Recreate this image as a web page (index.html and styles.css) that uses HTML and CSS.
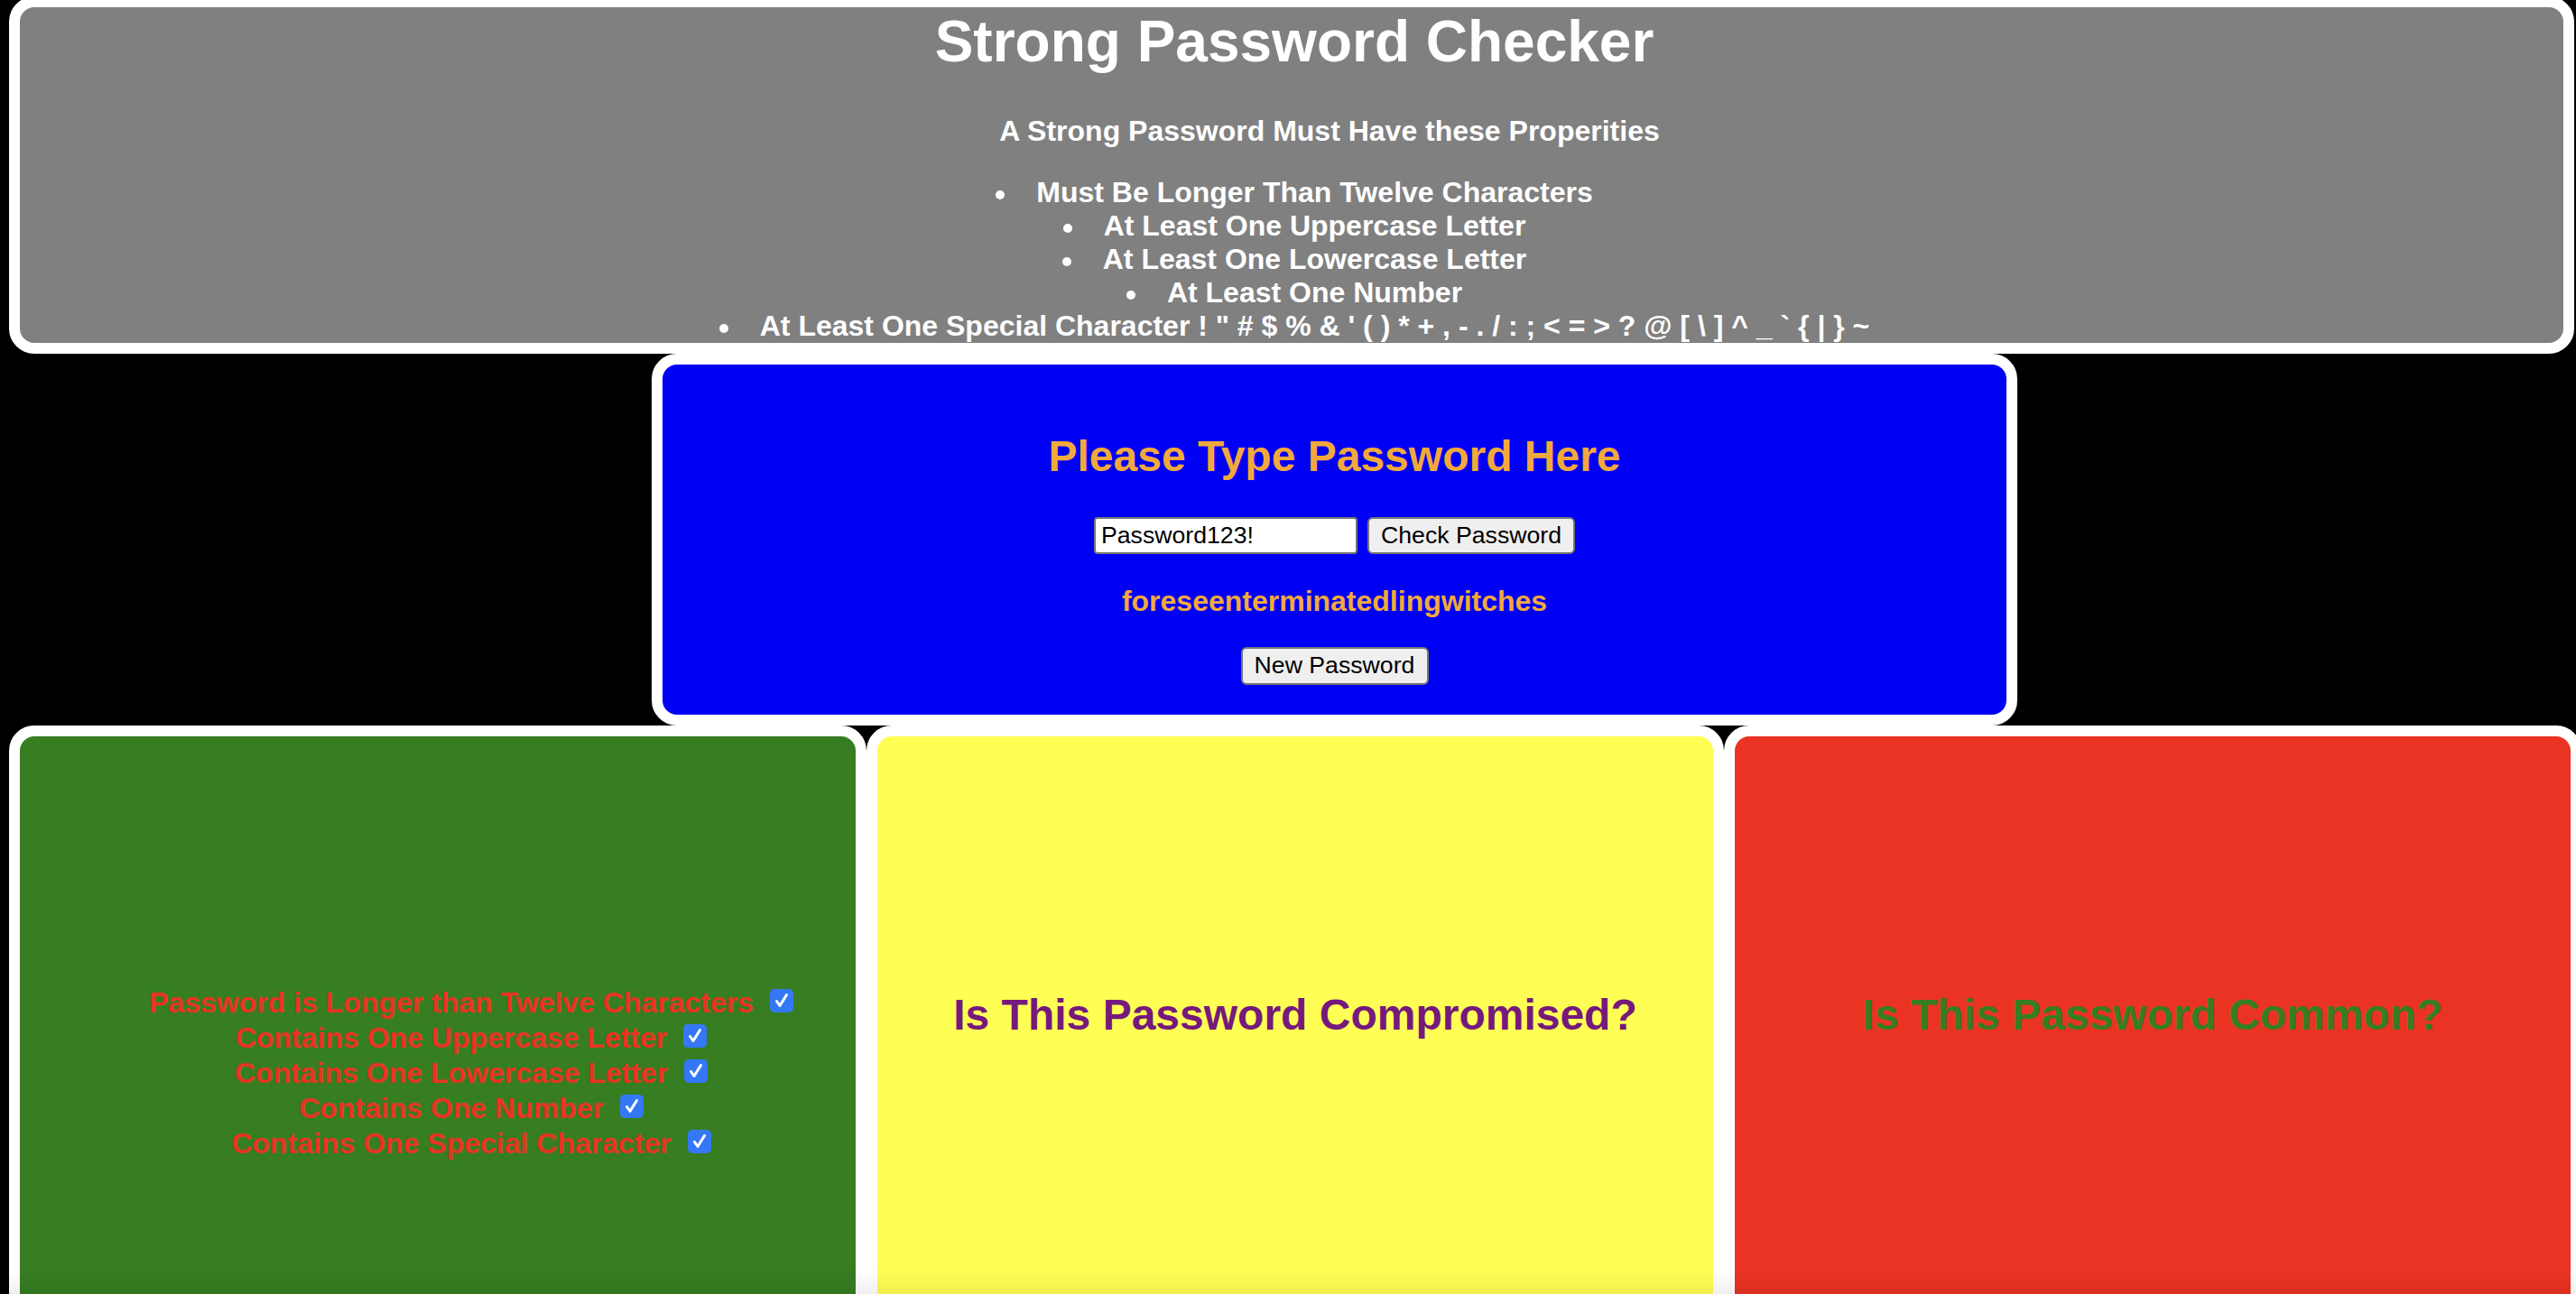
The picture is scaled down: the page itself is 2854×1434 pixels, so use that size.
FILE: index.html
```html
<!DOCTYPE html>
<html lang="en">
<head>
<meta charset="utf-8">
<title>Strong Password Checker</title>
<link rel="stylesheet" href="styles.css">
</head>
<body>
<header class="intro">
  <h1 class="title">Strong Password Checker</h1>
  <h4 class="subtitle">A Strong Password Must Have these Properities</h4>
  <ul class="rules">
    <li>Must Be Longer Than Twelve Characters</li>
    <li>At Least One Uppercase Letter</li>
    <li>At Least One Lowercase Letter</li>
    <li>At Least One Number</li>
    <li>At Least One Special Character ! " # $ % &amp; ' ( ) * + , - . / : ; &lt; = &gt; ? @ [ \ ] ^ _ ` { | } ~</li>
  </ul>
</header>

<section class="entry">
  <h2 class="entry-title">Please Type Password Here</h2>
  <div class="entry-row">
    <input class="pw-input" type="text" value="Password123!">
    <button class="btn btn-check" type="button">Check Password</button>
  </div>
  <p class="suggestion">foreseenterminatedlingwitches</p>
  <button class="btn btn-new" type="button">New Password</button>
</section>

<div class="results">
  <section class="card card-checks">
    <div class="check-line">Password is Longer than Twelve Characters <svg class="tick" viewBox="0 0 26 26"><rect x="0" y="0" width="26" height="26" rx="5" fill="#3478f6"/><path d="M7.5 13.5 L11 18.5 L18.5 6.5" fill="none" stroke="#fff" stroke-width="3" stroke-linecap="round" stroke-linejoin="round"/></svg></div>
    <div class="check-line">Contains One Uppercase Letter <svg class="tick" viewBox="0 0 26 26"><rect x="0" y="0" width="26" height="26" rx="5" fill="#3478f6"/><path d="M7.5 13.5 L11 18.5 L18.5 6.5" fill="none" stroke="#fff" stroke-width="3" stroke-linecap="round" stroke-linejoin="round"/></svg></div>
    <div class="check-line">Contains One Lowercase Letter <svg class="tick" viewBox="0 0 26 26"><rect x="0" y="0" width="26" height="26" rx="5" fill="#3478f6"/><path d="M7.5 13.5 L11 18.5 L18.5 6.5" fill="none" stroke="#fff" stroke-width="3" stroke-linecap="round" stroke-linejoin="round"/></svg></div>
    <div class="check-line">Contains One Number <svg class="tick" viewBox="0 0 26 26"><rect x="0" y="0" width="26" height="26" rx="5" fill="#3478f6"/><path d="M7.5 13.5 L11 18.5 L18.5 6.5" fill="none" stroke="#fff" stroke-width="3" stroke-linecap="round" stroke-linejoin="round"/></svg></div>
    <div class="check-line">Contains One Special Character <svg class="tick" viewBox="0 0 26 26"><rect x="0" y="0" width="26" height="26" rx="5" fill="#3478f6"/><path d="M7.5 13.5 L11 18.5 L18.5 6.5" fill="none" stroke="#fff" stroke-width="3" stroke-linecap="round" stroke-linejoin="round"/></svg></div>
  </section>
  <section class="card card-compromised">
    <h2 class="card-title">Is This Password Compromised?</h2>
  </section>
  <section class="card card-common">
    <h2 class="card-title">Is This Password Common?</h2>
  </section>
</div>
</body>
</html>
```

FILE: styles.css
```css
html,
body {
  margin: 0;
  height: 100%;
  background: #000;
  overflow: hidden;
}

body {
  padding-left: 10px;
  font-family: "Liberation Sans", Arial, Helvetica, sans-serif;
}

body::after {
  content: "";
  position: fixed;
  left: 0;
  right: 0;
  bottom: 0;
  height: 28px;
  background: linear-gradient(to bottom, rgba(0, 0, 0, 0), rgba(0, 0, 0, 0.06));
  pointer-events: none;
}

/* ---------- header ---------- */
.intro {
  box-sizing: border-box;
  width: 2842px;
  height: 396px;
  margin-top: -4px;
  padding-left: 6px;
  border: 12px solid #fff;
  border-radius: 28px;
  background: #808080;
  color: #fff;
  text-align: center;
}

.title {
  margin: 1px 0 0;
  font-size: 64px;
  line-height: 74px;
  font-weight: 700;
}

.subtitle {
  margin: 44px 0 0;
  padding-left: 78px;
  font-size: 32px;
  line-height: 37px;
  font-weight: 700;
}

.rules {
  list-style: none;
  margin: 31px 0 0;
  padding: 0;
  font-size: 32px;
  line-height: 37px;
  font-weight: 700;
}

.rules li::before {
  content: "";
  display: inline-block;
  width: 10px;
  height: 10px;
  border-radius: 50%;
  background: #fff;
  margin-right: 35px;
  vertical-align: 3px;
}

/* ---------- entry panel ---------- */
.entry {
  box-sizing: border-box;
  width: 1513px;
  margin-left: 712px;
  border: 12px solid #fff;
  border-radius: 28px;
  background: #0000f5;
  display: flex;
  flex-direction: column;
  align-items: center;
  padding: 33.5px 0;
  color: #f2a93b;
}

.entry-title {
  margin: 40px 0 0;
  font-size: 48px;
  line-height: 55px;
  font-weight: 700;
}

.entry-row {
  margin-top: 40px;
  display: flex;
  gap: 11px;
}

.pw-input {
  box-sizing: border-box;
  width: 292px;
  height: 41px;
  margin: 0;
  padding: 0 6px;
  border: 2px solid #767676;
  border-radius: 4px;
  background: #fff;
  color: #000;
  font-family: "Liberation Sans", Arial, sans-serif;
  font-size: 26.67px;
}

.btn {
  box-sizing: border-box;
  height: 41px;
  margin: 0;
  padding: 0;
  border: 2px solid #767676;
  border-radius: 6px;
  background: #efefef;
  color: #000;
  font-family: "Liberation Sans", Arial, sans-serif;
  font-size: 26.67px;
}

.btn-check {
  width: 230px;
}

.suggestion {
  margin: 34px 0 0;
  font-size: 32px;
  line-height: 37px;
  font-weight: 700;
}

.btn-new {
  margin-top: 32.5px;
  width: 208px;
  height: 41.5px;
}

/* ---------- result cards ---------- */
.results {
  display: flex;
  width: 2850px;
}

.card {
  flex: 0 0 950px;
  box-sizing: border-box;
  height: 720px;
  border: 12px solid #fff;
  border-radius: 28px;
  text-align: center;
}

.card-checks {
  background: #377d22;
  color: #ea3323;
  padding: 276px 0 0 80px;
  font-size: 32px;
  line-height: 39px;
  font-weight: 700;
}

.check-line {
  display: block;
}

.tick {
  width: 26px;
  height: 26px;
  margin: 0 6px 0 9px;
  vertical-align: baseline;
}

.card-compromised {
  background: #fffe55;
  color: #75197c;
  padding-top: 281px;
}

.card-common {
  background: #ea3323;
  color: #377d22;
  padding-top: 281px;
}

.card-title {
  margin: 0;
  font-size: 48px;
  line-height: 55px;
  font-weight: 700;
}
```
